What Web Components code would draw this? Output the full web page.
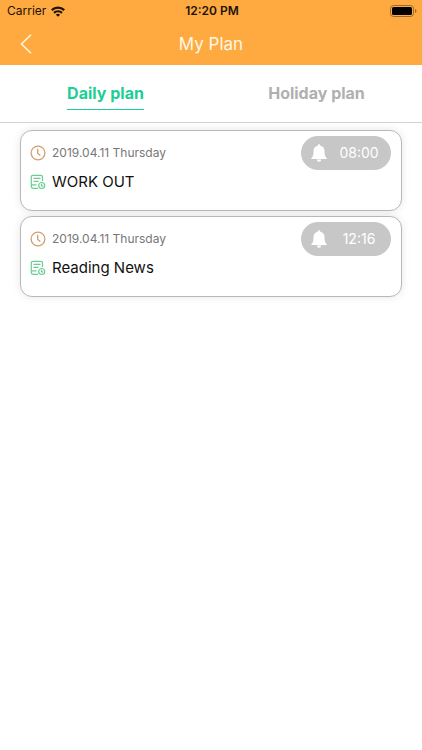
<!DOCTYPE html>
<html lang="en">
<head>
<meta charset="utf-8">
<meta name="viewport" content="width=device-width, initial-scale=1">
<title>My Plan</title>
<style>
body { margin: 0; background: #fff; font-family: Inter, "Liberation Sans", sans-serif; }
</style>
</head>
<body>
<plan-app></plan-app>

<template id="status-bar">
<style>
:host { display: grid; grid-template-columns: 1fr auto 1fr; align-items: center; height: 22px; padding: 0 5px 0 7px; color: #1c1205; font-size: 12px; line-height: 22px; }
.left { display: flex; align-items: center; gap: 5px; }
.time { font-weight: 600; }
.battery { justify-self: end; }
svg { display: block; }
</style>
<div class="left"><span>Carrier</span>
<svg width="14" height="11" viewBox="0 0 14 11" fill="none" stroke="#1c1205" stroke-width="2.200"><path d="M.8 4.100a8.800 8.800 0 0 1 12.400 0M3 6.900a5.700 5.700 0 0 1 8 0"/><path d="M7 10.800 4.900 8.700a3 3 0 0 1 4.200 0z" fill="#1c1205" stroke="none"/></svg></div>
<span class="time"><slot></slot></span>
<svg class="battery" width="27" height="12" viewBox="0 0 27 12"><rect x=".5" y=".5" width="23" height="11" rx="3" fill="none" stroke="#9a682d"/><rect x="2" y="2" width="20" height="8" rx="1.500" fill="#000"/><path d="M25 4v4q1.500-.6 1.500-2T25 4" fill="#9a682d"/></svg>
</template>

<template id="nav-header">
<style>
:host { display: grid; grid-template-columns: 52px 1fr 52px; align-items: center; height: 43px; color: #fff8e6; }
button { display: grid; place-items: center; height: 43px; padding: 0; border: 0; background: none; color: inherit; }
h1 { margin: 0; text-align: center; font-size: 17px; line-height: 24px; font-weight: 400; }
</style>
<button type="button" aria-label="Back"><svg width="12" height="20" viewBox="0 0 12 20" fill="none" stroke="currentColor" stroke-width="1.500"><path d="M11 .8 1.500 10 11 19.200"/></svg></button>
<h1><slot></slot></h1>
</template>

<template id="plan-tab">
<style>
:host { display: flex; justify-content: center; }
button { margin: 0; padding: 0 0 4px; border: 0; border-bottom: 1px solid transparent; background: none; color: #b0b0b0; font: 700 16px/24px Inter, "Liberation Sans", sans-serif; }
:host([selected]) button { color: #1dce95; border-color: #1dce95; }
</style>
<button type="button" role="tab"><slot></slot></button>
</template>

<template id="plan-tabs">
<style>
:host { display: grid; grid-template-columns: 1fr 1fr; padding: 16px 0 12px; border-bottom: 1px solid #d3d3d3; background: #fff; }
</style>
<slot></slot>
</template>

<template id="reminder-pill">
<style>
:host { display: block; }
button { display: grid; grid-template-columns: 36px 1fr; align-items: center; width: 90px; height: 34px; padding: 0 10px 0 0; border: 0; border-radius: 17px; background: #c7c7c7; color: #fff; font: 400 14px/20px Inter, "Liberation Sans", sans-serif; }
svg { display: block; justify-self: center; }
</style>
<button type="button"><svg width="16" height="18" viewBox="0 0 16 18" fill="currentColor" aria-hidden="true"><path d="M8 .3c-.9 0-1.300.6-1.300 1.500C4 2.300 2.500 4.400 2.500 7c0 4.200-.7 6-2 7-.5.400-.3 1 .4 1h14.200c.7 0 .9-.6.400-1-1.300-1-2-2.800-2-7 0-2.600-1.500-4.700-4.200-5.200C9.300.9 8.900.3 8 .3M5.800 15.500a2.200 2.200 0 0 0 4.400 0z"/></svg><span><slot></slot></span></button>
</template>

<template id="plan-card">
<style>
:host { display: flex; justify-content: space-between; align-items: flex-start; box-sizing: border-box; min-height: 81px; padding: 5px 10px 10px 9px; border: 1px solid #b8b8b8; border-radius: 12px; background: #fff; box-shadow: 0 0 8px rgba(0,0,0,.1); }
.info { display: grid; grid-template-columns: 16px 1fr; column-gap: 6px; align-items: center; padding-top: 5px; }
svg { display: block; }
.date { color: #777; font-size: 12px; line-height: 24px; }
.title { color: #111; font-size: 15px; line-height: 34px; }
</style>
<div class="info">
<svg width="16" height="16" viewBox="0 0 16 16" fill="none" stroke="#ce9f70" stroke-width="1.300" aria-hidden="true"><circle cx="8" cy="8" r="6.900"/><path d="M7.700 3.800v4.700l2.700 2"/></svg>
<span class="date"><slot name="date"></slot></span>
<svg width="16" height="16" viewBox="0 0 16 16" fill="none" stroke="#69cf91" stroke-width="1.200" aria-hidden="true"><path d="M12.500 7V3q0-1.700-1.700-1.700H3Q1.300 1.300 1.300 3v9.600q0 1.700 1.700 1.700h5M3.500 4.300h7M3.500 7.300h5M1.500 10.800h5"/><circle cx="11.700" cy="11.500" r="3"/><path d="M11.500 9.800v2h1.700"/></svg>
<span class="title"><slot name="title"></slot></span>
</div>
<slot name="reminder"></slot>
</template>

<template id="plan-app">
<style>
:host { display: block; }
header { background: #ffaa41; }
main { display: grid; gap: 5px; padding: 7px 20px; }
</style>
<header><status-bar>12:20 PM</status-bar><nav-header>My Plan</nav-header></header>
<plan-tabs role="tablist"><plan-tab selected>Daily plan</plan-tab><plan-tab>Holiday plan</plan-tab></plan-tabs>
<main>
<plan-card><span slot="date">2019.04.11 Thursday</span><span slot="title">WORK OUT</span><reminder-pill slot="reminder">08:00</reminder-pill></plan-card>
<plan-card><span slot="date">2019.04.11 Thursday</span><span slot="title">Reading News</span><reminder-pill slot="reminder">12:16</reminder-pill></plan-card>
</main>
</template>

<script>
class TemplateElement extends HTMLElement {
  constructor() {
    super();
    this.attachShadow({ mode: 'open' }).append(document.getElementById(this.localName).content.cloneNode(true));
  }
}
class StatusBar extends TemplateElement {}
class NavHeader extends TemplateElement {}
class PlanTab extends TemplateElement {
  connectedCallback() {
    this.shadowRoot.querySelector('button').setAttribute('aria-selected', this.hasAttribute('selected'));
  }
}
class PlanTabs extends TemplateElement {
  connectedCallback() {
    this.addEventListener('click', (event) => {
      const tab = event.target.closest('plan-tab');
      if (!tab) return;
      for (const item of this.children) {
        item.toggleAttribute('selected', item === tab);
        item.connectedCallback();
      }
    });
  }
}
class ReminderPill extends TemplateElement {}
class PlanCard extends TemplateElement {}
class PlanApp extends TemplateElement {}
customElements.define('status-bar', StatusBar);
customElements.define('nav-header', NavHeader);
customElements.define('plan-tab', PlanTab);
customElements.define('plan-tabs', PlanTabs);
customElements.define('reminder-pill', ReminderPill);
customElements.define('plan-card', PlanCard);
customElements.define('plan-app', PlanApp);
</script>
</body>
</html>
